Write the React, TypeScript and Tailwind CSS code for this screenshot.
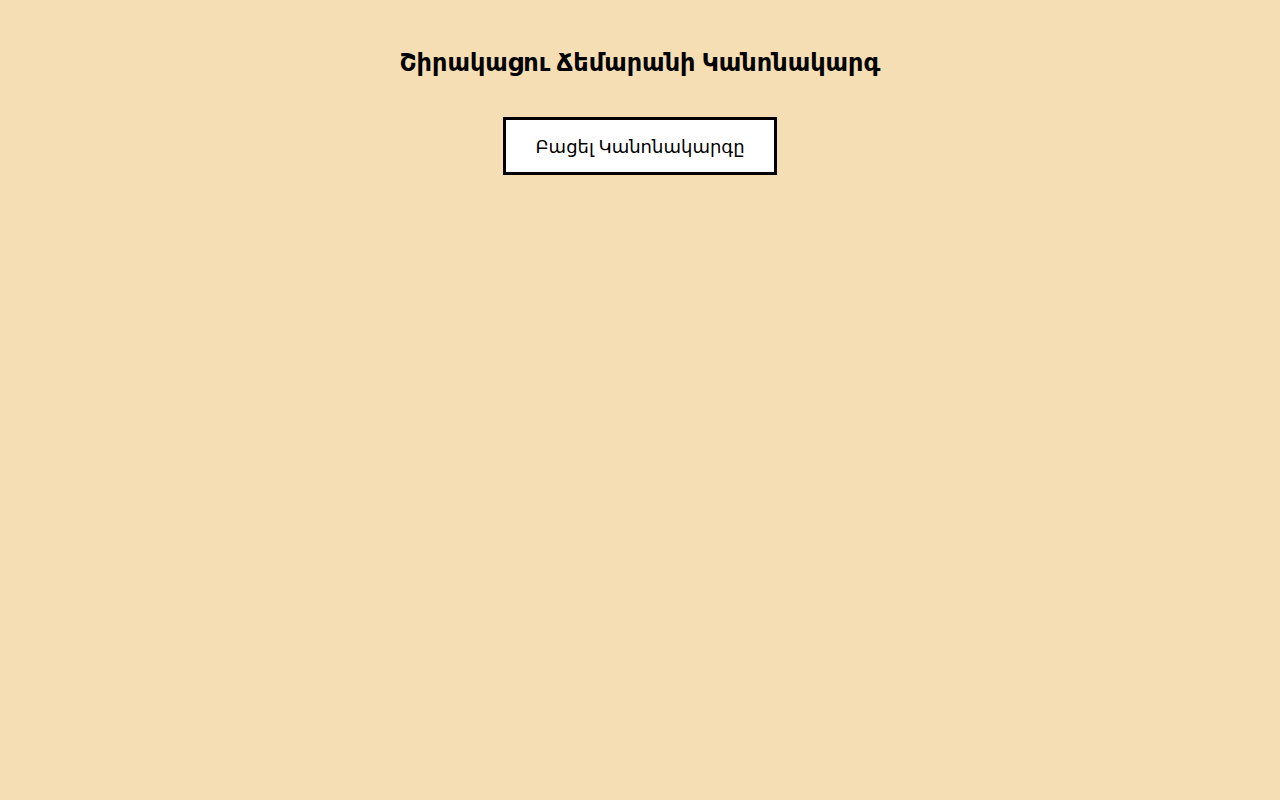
export default function App() {
  return (
    <div className="min-h-screen w-full bg-[#f5deb3] flex flex-col items-center pt-[44px]" style={{ fontFamily: '"Noto Sans", "DejaVu Sans", sans-serif' }}>
      <h1 className="text-[24px] leading-[36px] font-bold text-black">Շիրակացու Ճեմարանի Կանոնակարգ</h1>
      <button className="mt-[37px] h-[58px] w-[274px] border-[3px] border-black bg-white text-[18px] text-black">Բացել Կանոնակարգը</button>
    </div>
  );
}
